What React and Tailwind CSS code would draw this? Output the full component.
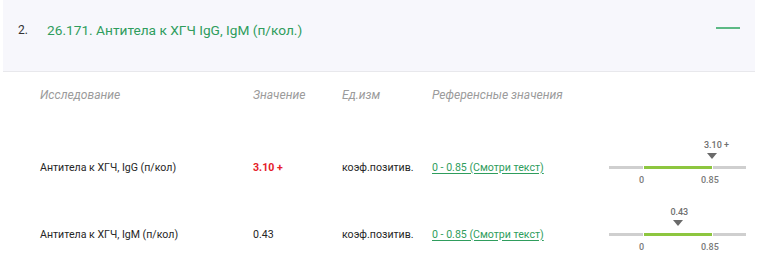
import React from 'react';

const ROWS = [
  { name: 'Антитела к ХГЧ, IgG (п/кол)', value: '3.10 +', high: true, pos: 1, unit: 'коэф.позитив.', ref: '0 - 0.85 (Смотри текст)' },
  { name: 'Антитела к ХГЧ, IgM (п/кол)', value: '0.43', high: false, pos: 0.43 / 0.85, unit: 'коэф.позитив.', ref: '0 - 0.85 (Смотри текст)' },
];

// green norm segment: 35px..103px inside the 137px scale
const NORM_LEFT = 35;
const NORM_WIDTH = 68;

function Scale({ pos, label }) {
  const x = NORM_LEFT + Math.min(pos, 1) * NORM_WIDTH;
  return (
    <div className="relative w-[137px] h-[3px]">
      <div className="flex h-[3px] gap-[1px]">
        <div className="w-[34px] bg-[#cfcfcf]" />
        <div className="w-[68px] bg-[#8dc63f]" />
        <div className="w-[33px] bg-[#cfcfcf]" />
      </div>
      <span className="absolute top-[9px] left-[30px] text-[9px] leading-[10px] font-medium text-[#7a7a7a]">0</span>
      <span className="absolute top-[9px] left-[92px] text-[9px] leading-[10px] font-medium text-[#7a7a7a]">0.85</span>
      <span
        className="absolute top-[-26px] text-[9px] leading-[10px] font-medium text-[#707070] whitespace-nowrap"
        style={{ left: x - 8 }}
      >
        {label}
      </span>
      <div
        className="absolute top-[-13px] w-0 h-0 border-l-[5px] border-r-[5px] border-t-[6px] border-l-transparent border-r-transparent border-t-[#6a6a6a]"
        style={{ left: x - 5 }}
      />
    </div>
  );
}

export default function App() {
  return (
    <div className="w-[770px] h-[260px] bg-white overflow-hidden font-['Roboto',sans-serif]">
      <div className="ml-[3px] w-[752px]">
        <div className="h-[72px] flex items-center bg-[#f7f7fc] border-b border-[#e8e8ec] pl-[15px] pr-[15px] pb-[11px]">
          <span className="w-[29px] text-[12px] text-[#333]">2.</span>
          <span className="flex-1 text-[13.7px] text-[#2f9d5d]">26.171. Антитела к ХГЧ IgG, IgM (п/кол.)</span>
          <span className="w-[24px] h-[2px] mb-[4px] bg-[#5db985]" />
        </div>

        <div className="pl-[37px]">
          <div className="grid grid-cols-[213px_89px_90px_177px_137px] h-[62px] pt-[16px] text-[12.1px] leading-[14px] italic text-[#9b9b9b]">
            <span>Исследование</span>
            <span>Значение</span>
            <span>Ед.изм</span>
            <span>Референсные значения</span>
            <span />
          </div>

          {ROWS.map(r => (
            <div key={r.name} className="grid grid-cols-[213px_89px_90px_177px_137px] h-[67px] items-center text-[10.6px] text-[#262626]">
              <span>{r.name}</span>
              <span className={r.high ? 'font-bold text-[#e5202a]' : ''}>{r.value}</span>
              <span>{r.unit}</span>
              <span className="text-[#2f9d5d] underline underline-offset-2">{r.ref}</span>
              <Scale pos={r.pos} label={r.value} />
            </div>
          ))}
        </div>
      </div>
    </div>
  );
}
